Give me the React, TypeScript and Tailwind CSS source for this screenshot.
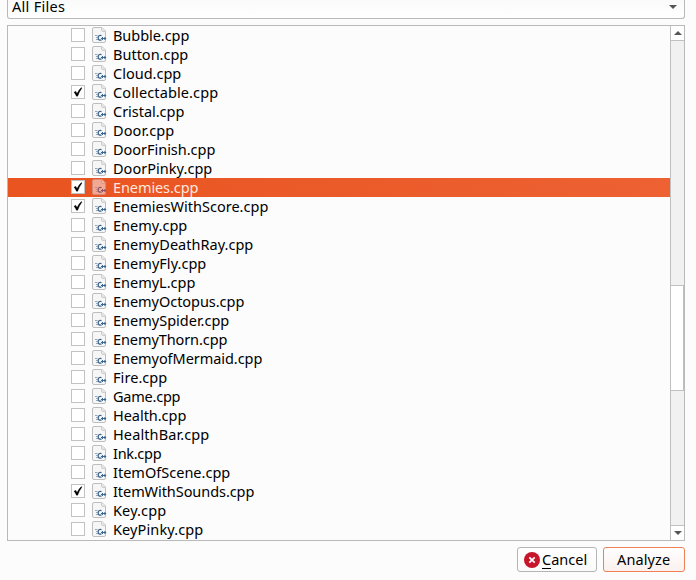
import { useLayoutEffect, useRef, useState } from 'react';

type Entry = { name: string; width: number; checked?: boolean; selected?: boolean };

const files: Entry[] = [
  { name: 'Bubble.cpp', width: 76 },
  { name: 'Button.cpp', width: 75 },
  { name: 'Cloud.cpp', width: 68 },
  { name: 'Collectable.cpp', width: 105, checked: true },
  { name: 'Cristal.cpp', width: 71 },
  { name: 'Door.cpp', width: 61 },
  { name: 'DoorFinish.cpp', width: 102 },
  { name: 'DoorPinky.cpp', width: 99 },
  { name: 'Enemies.cpp', width: 85, checked: true, selected: true },
  { name: 'EnemiesWithScore.cpp', width: 155, checked: true },
  { name: 'Enemy.cpp', width: 74 },
  { name: 'EnemyDeathRay.cpp', width: 140 },
  { name: 'EnemyFly.cpp', width: 93 },
  { name: 'EnemyL.cpp', width: 82 },
  { name: 'EnemyOctopus.cpp', width: 131 },
  { name: 'EnemySpider.cpp', width: 116 },
  { name: 'EnemyThorn.cpp', width: 114 },
  { name: 'EnemyofMermaid.cpp', width: 149 },
  { name: 'Fire.cpp', width: 54 },
  { name: 'Game.cpp', width: 67 },
  { name: 'Health.cpp', width: 73 },
  { name: 'HealthBar.cpp', width: 96 },
  { name: 'Ink.cpp', width: 48 },
  { name: 'ItemOfScene.cpp', width: 117 },
  { name: 'ItemWithSounds.cpp', width: 141, checked: true },
  { name: 'Key.cpp', width: 53 },
  { name: 'KeyPinky.cpp', width: 90 },
];

/* Spaces its letters so that the label takes up the given width. */
function Label({ text, width }: { text: string; width: number }) {
  const ref = useRef<HTMLSpanElement>(null);
  const [spacing, setSpacing] = useState(0);
  useLayoutEffect(() => {
    if (ref.current) {
      const natural = ref.current.getBoundingClientRect().width;
      setSpacing((width + 0.3 - natural) / text.length);
    }
  }, [text, width]);
  return (
    <span ref={ref} className="whitespace-nowrap" style={{ letterSpacing: spacing }}>
      {text}
    </span>
  );
}

function Checkbox({ checked }: { checked?: boolean }) {
  return (
    <span className="mb-px h-3.5 w-3.5 shrink-0 border border-[#c2c2c2] bg-white">
      {checked && (
        <svg viewBox="0 0 12 12" className="h-3 w-3">
          <path d="M2 6.2 3.8 5.3 5 7.6Q6.8 3.8 9.3 1.6L10 2Q7.3 5.6 5.7 10.2H4.4Q3.4 7.8 2 6.2Z" fill="#000" stroke="#000" strokeWidth=".3" />
        </svg>
      )}
    </span>
  );
}

function FileIcon({ selected }: { selected?: boolean }) {
  return (
    <svg viewBox="0 0 16 16" className="mb-px ml-[7px] h-4 w-4 shrink-0">
      <path d="M2 .5H10L13.5 4V14Q13.5 15.5 12 15.5H2Q.5 15.5 .5 14V2Q.5.5 2 .5Z" fill={selected ? '#f3a893' : '#f6f6f6'} stroke={selected ? '#d58b78' : '#bebebe'} />
      <path d="M9.5.5V3Q9.5 4.5 11 4.5H13.5" fill={selected ? '#f5b8a5' : '#e8e8e8'} stroke={selected ? '#d99584' : '#cccccc'} />
      <path d="M3 8.5H5.5M4 10.5H5.5M4 12.5H6" stroke={selected ? '#c08680' : '#8f9cab'} strokeWidth=".9" />
      <path d="M9.5 8.6Q6.2 7.8 6.2 10.8Q6.2 13.8 9.5 13" fill="none" stroke={selected ? '#8c5565' : '#39658f'} strokeWidth="1.3" />
      <path d="M9 11.5H14.2M10.5 10V13M12.9 10V13" stroke={selected ? '#8c5565' : '#39658f'} strokeWidth="1" />
    </svg>
  );
}

function Arrow({ up }: { up?: boolean }) {
  return (
    <svg viewBox="0 0 8 4" className="h-1 w-2">
      <path d={up ? 'M0 4 4 0 8 4Z' : 'M0 0H8L4 4Z'} fill="#555" />
    </svg>
  );
}

export default function App() {
  return (
    <div className="flex h-[580px] w-[696px] flex-col overflow-hidden bg-[#fcfcfc] pl-[7px] pr-[11px] font-['Noto_Sans',sans-serif] text-[14.5px] text-black">
      <div className="flex h-[19px] shrink-0 items-start justify-between rounded-b-[3px] border border-t-0 border-[#b9b9b9] bg-linear-to-b from-[#fafafa] to-white pl-1 pr-[7px]">
        <span className="leading-[12px]">
          <Label text="All Files" width={53} />
        </span>
        <span className="mt-[5px] flex"><Arrow /></span>
      </div>
      <div className="mt-1.5 flex h-[516px] shrink-0 border border-[#b9b9b9]">
        <div className="min-w-0 flex-1 overflow-hidden">
          {files.map((file) => (
            <div
              key={file.name}
              className={`flex h-[19px] items-center pl-[63px] ${file.selected ? 'bg-linear-to-r from-[#e95420] to-[#ed6132] text-[#ffe7dd]' : ''}`}
            >
              <Checkbox checked={file.checked} />
              <FileIcon selected={file.selected} />
              <span className="ml-[5px] leading-[19px]">
                <Label text={file.name} width={file.width} />
              </span>
            </div>
          ))}
        </div>
        <div className="flex w-[14px] shrink-0 flex-col border-l border-[#c0c0c0] bg-[#f1f1f1]">
          <div className="flex h-[15px] items-center justify-center border-b border-[#c0c0c0] bg-white"><Arrow up /></div>
          <div className="h-[244px]" />
          <div className="h-[106px] border-y border-r border-[#c0c0c0] bg-white" />
          <div className="flex-1" />
          <div className="flex h-[15px] items-center justify-center border-t border-[#c0c0c0] bg-white"><Arrow /></div>
        </div>
      </div>
      <div className="mt-1.5 flex shrink-0 justify-end gap-1.5">
        <button className="flex h-[25px] w-20 items-center rounded-[3px] border border-[#b5b5b5] bg-linear-to-b from-white to-[#fafafa] pl-1.5">
          <svg viewBox="0 0 16 16" className="h-4 w-4 shrink-0">
            <circle cx="8" cy="8" r="8" fill="#c7162b" />
            <path d="M5.3 5.3 10.7 10.7M10.7 5.3 5.3 10.7" stroke="#fff" strokeWidth="1.7" />
          </svg>
          <span className="relative ml-0.5 leading-[19px]">
            <Label text="Cancel" width={45} />
            <span className="absolute bottom-0 left-0 h-px w-[9px] bg-black" />
          </span>
        </button>
        <button className="flex h-[25px] w-[82px] items-center rounded-[3px] border border-[#ef8159] bg-linear-to-b from-white to-[#fbf0ed] pl-[13px] leading-[19px]">
          <Label text="Analyze" width={53} />
        </button>
      </div>
    </div>
  );
}
